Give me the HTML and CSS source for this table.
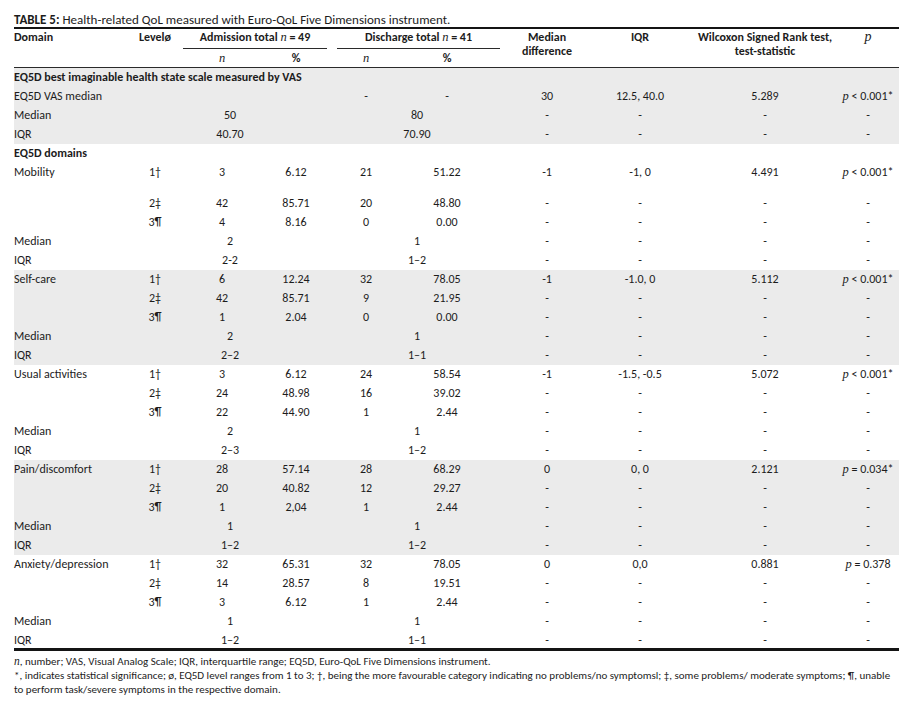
FILE: index.html
```html
<!DOCTYPE html>
<html lang="en">
<head>
<meta charset="utf-8">
<title>TABLE 5</title>
<link rel="stylesheet" href="styles.css">
</head>
<body>
<div class="page">
  <div class="caption"><b>TABLE 5:</b> Health-related QoL measured with Euro-QoL Five Dimensions instrument.</div>
  <table class="qol">
    <colgroup>
      <col class="c-domain"><col class="c-level"><col class="c-an"><col class="c-ap"><col class="c-dn"><col class="c-dp"><col class="c-md"><col class="c-iqr"><col class="c-wil"><col class="c-p">
    </colgroup>
    <thead>
      <tr class="h1">
        <th rowspan="2" class="left top">Domain</th>
        <th rowspan="2" class="top">Levelø</th>
        <th colspan="2" class="grp adm"><div class="grp-line adm-line">Admission total <i class="it">n</i> = 49</div></th>
        <th colspan="2" class="grp dis"><div class="grp-line dis-line">Discharge total <i class="it">n</i> = 41</div></th>
        <th rowspan="2" class="top">Median<br>difference</th>
        <th rowspan="2" class="top">IQR</th>
        <th rowspan="2" class="top wil">Wilcoxon Signed Rank test,<br>test-statistic</th>
        <th rowspan="2" class="top"><i class="it pbig">p</i></th>
      </tr>
      <tr class="h2">
        <th><i class="it">n</i></th>
        <th>%</th>
        <th><i class="it">n</i></th>
        <th>%</th>
      </tr>
    </thead>
    <tbody class="shade">
      <tr><td colspan="10" class="left bold">EQ5D best imaginable health state scale measured by VAS</td></tr>
      <tr><td class="left">EQ5D VAS median</td><td></td><td></td><td></td><td>-</td><td>-</td><td>30</td><td>12.5, 40.0</td><td class="wil">5.289</td><td><i class="it">p</i> &lt; 0.001*</td></tr>
      <tr><td class="left">Median</td><td></td><td colspan="2" class="adm-span">50</td><td colspan="2" class="dis-span">80</td><td>-</td><td>-</td><td class="wil">-</td><td>-</td></tr>
      <tr><td class="left">IQR</td><td></td><td colspan="2" class="adm-span">40.70</td><td colspan="2" class="dis-span">70.90</td><td>-</td><td>-</td><td class="wil">-</td><td>-</td></tr>
    </tbody>
    <tbody>
      <tr><td colspan="10" class="left bold">EQ5D domains</td></tr>
      <tr class="tall"><td class="left">Mobility</td><td>1†</td><td>3</td><td>6.12</td><td>21</td><td>51.22</td><td>-1</td><td>-1, 0</td><td class="wil">4.491</td><td><i class="it">p</i> &lt; 0.001*</td></tr>
      <tr><td></td><td>2‡</td><td>42</td><td>85.71</td><td>20</td><td>48.80</td><td>-</td><td>-</td><td class="wil">-</td><td>-</td></tr>
      <tr><td></td><td>3¶</td><td>4</td><td>8.16</td><td>0</td><td>0.00</td><td>-</td><td>-</td><td class="wil">-</td><td>-</td></tr>
      <tr><td class="left">Median</td><td></td><td colspan="2" class="adm-span">2</td><td colspan="2" class="dis-span">1</td><td>-</td><td>-</td><td class="wil">-</td><td>-</td></tr>
      <tr><td class="left">IQR</td><td></td><td colspan="2" class="adm-span">2-2</td><td colspan="2" class="dis-span">1–2</td><td>-</td><td>-</td><td class="wil">-</td><td>-</td></tr>
    </tbody>
    <tbody class="shade">
      <tr><td class="left">Self-care</td><td>1†</td><td>6</td><td>12.24</td><td>32</td><td>78.05</td><td>-1</td><td>-1.0, 0</td><td class="wil">5.112</td><td><i class="it">p</i> &lt; 0.001*</td></tr>
      <tr><td></td><td>2‡</td><td>42</td><td>85.71</td><td>9</td><td>21.95</td><td>-</td><td>-</td><td class="wil">-</td><td>-</td></tr>
      <tr><td></td><td>3¶</td><td>1</td><td>2.04</td><td>0</td><td>0.00</td><td>-</td><td>-</td><td class="wil">-</td><td>-</td></tr>
      <tr><td class="left">Median</td><td></td><td colspan="2" class="adm-span">2</td><td colspan="2" class="dis-span">1</td><td>-</td><td>-</td><td class="wil">-</td><td>-</td></tr>
      <tr><td class="left">IQR</td><td></td><td colspan="2" class="adm-span">2–2</td><td colspan="2" class="dis-span">1–1</td><td>-</td><td>-</td><td class="wil">-</td><td>-</td></tr>
    </tbody>
    <tbody>
      <tr><td class="left">Usual activities</td><td>1†</td><td>3</td><td>6.12</td><td>24</td><td>58.54</td><td>-1</td><td>-1.5, -0.5</td><td class="wil">5.072</td><td><i class="it">p</i> &lt; 0.001*</td></tr>
      <tr><td></td><td>2‡</td><td>24</td><td>48.98</td><td>16</td><td>39.02</td><td>-</td><td>-</td><td class="wil">-</td><td>-</td></tr>
      <tr><td></td><td>3¶</td><td>22</td><td>44.90</td><td>1</td><td>2.44</td><td>-</td><td>-</td><td class="wil">-</td><td>-</td></tr>
      <tr><td class="left">Median</td><td></td><td colspan="2" class="adm-span">2</td><td colspan="2" class="dis-span">1</td><td>-</td><td>-</td><td class="wil">-</td><td>-</td></tr>
      <tr><td class="left">IQR</td><td></td><td colspan="2" class="adm-span">2–3</td><td colspan="2" class="dis-span">1–2</td><td>-</td><td>-</td><td class="wil">-</td><td>-</td></tr>
    </tbody>
    <tbody class="shade">
      <tr><td class="left">Pain/discomfort</td><td>1†</td><td>28</td><td>57.14</td><td>28</td><td>68.29</td><td>0</td><td>0, 0</td><td class="wil">2.121</td><td><i class="it">p</i> = 0.034*</td></tr>
      <tr><td></td><td>2‡</td><td>20</td><td>40.82</td><td>12</td><td>29.27</td><td>-</td><td>-</td><td class="wil">-</td><td>-</td></tr>
      <tr><td></td><td>3¶</td><td>1</td><td>2,04</td><td>1</td><td>2.44</td><td>-</td><td>-</td><td class="wil">-</td><td>-</td></tr>
      <tr><td class="left">Median</td><td></td><td colspan="2" class="adm-span">1</td><td colspan="2" class="dis-span">1</td><td>-</td><td>-</td><td class="wil">-</td><td>-</td></tr>
      <tr><td class="left">IQR</td><td></td><td colspan="2" class="adm-span">1–2</td><td colspan="2" class="dis-span">1–2</td><td>-</td><td>-</td><td class="wil">-</td><td>-</td></tr>
    </tbody>
    <tbody class="last">
      <tr><td class="left">Anxiety/depression</td><td>1†</td><td>32</td><td>65.31</td><td>32</td><td>78.05</td><td>0</td><td>0,0</td><td class="wil">0.881</td><td><i class="it">p</i> = 0.378</td></tr>
      <tr><td></td><td>2‡</td><td>14</td><td>28.57</td><td>8</td><td>19.51</td><td>-</td><td>-</td><td class="wil">-</td><td>-</td></tr>
      <tr><td></td><td>3¶</td><td>3</td><td>6.12</td><td>1</td><td>2.44</td><td>-</td><td>-</td><td class="wil">-</td><td>-</td></tr>
      <tr><td class="left">Median</td><td></td><td colspan="2" class="adm-span">1</td><td colspan="2" class="dis-span">1</td><td>-</td><td>-</td><td class="wil">-</td><td>-</td></tr>
      <tr class="end"><td class="left">IQR</td><td></td><td colspan="2" class="adm-span">1–2</td><td colspan="2" class="dis-span">1–1</td><td>-</td><td>-</td><td class="wil">-</td><td>-</td></tr>
    </tbody>
  </table>
  <div class="notes">
    <p><i class="it">n</i>, number; VAS, Visual Analog Scale; IQR, interquartile range; EQ5D, Euro-QoL Five Dimensions instrument.</p>
    <p>*, indicates statistical significance; ø, EQ5D level ranges from 1 to 3; †, being the more favourable category indicating no problems/no symptomsl; ‡, some problems/ moderate symptoms; ¶, unable to perform task/severe symptoms in the respective domain.</p>
  </div>
</div>
</body>
</html>
```

FILE: styles.css
```css
html, body {
  margin: 0;
  padding: 0;
  background: #ffffff;
}

body {
  font-family: Carlito, Lato, "Liberation Sans", sans-serif;
  font-size: 12px;
  color: #1c1c1c;
}

.page {
  padding: 13px 0 0 14px;
  width: 885px;
}

.caption {
  font-size: 13px;
  line-height: 14px;
}

.caption b {
  font-weight: 700;
}

.it {
  font-family: "Liberation Serif", "Times New Roman", serif;
  font-style: italic;
  font-weight: 400;
  font-size: 12.5px;
}

.pbig {
  font-size: 14px;
}

.qol {
  border-collapse: collapse;
  table-layout: fixed;
  width: 885px;
  border-top: 2px solid #141414;
  margin-top: 0;
}

.c-domain { width: 111px; }
.c-level { width: 60px; }
.c-an { width: 74px; }
.c-ap { width: 74px; }
.c-dn { width: 66px; }
.c-dp { width: 96px; }
.c-md { width: 104px; }
.c-iqr { width: 82px; }
.c-wil { width: 156px; }
.c-p { width: 62px; }

.qol th,
.qol td {
  padding: 2px 0;
  line-height: 15px;
  white-space: nowrap;
  text-align: center;
  vertical-align: top;
  font-weight: 700;
}

.qol td {
  font-weight: 400;
}

.qol .left {
  text-align: left;
}

.qol .bold {
  font-weight: 700;
}

.qol th.top {
  padding: 1px 0 0;
  line-height: 14px;
  border-bottom: 1px solid #2a2a2a;
}

.qol th.wil,
.qol td.wil {
  padding-left: 12px;
}

.qol tr.h1 th.grp {
  padding: 1px 0 0;
}

.grp-line {
  line-height: 15px;
  padding-bottom: 3px;
  border-bottom: 1px solid #2a2a2a;
}

.adm-line {
  margin: 0 6px 0 -2px;
}

.qol th.dis {
  padding-left: 6px;
}

.dis-line {
  margin: 0 -5px 0 4px;
}

.qol tr.h2 th {
  padding: 2px 0 1px;
  border-bottom: 1px solid #2a2a2a;
}

.qol td.adm-span {
  padding-right: 58px;
}

.qol td.dis-span {
  padding-left: 6px;
}

.qol tbody.shade tr {
  background: #ebebeb;
}

.qol tr.tall td {
  padding-bottom: 14px;
}

.qol tr.end td {
  padding-bottom: 0;
}

.qol tbody.last tr.end td {
  border-bottom: 3px solid #141414;
}

.notes {
  margin-top: 4px;
  font-size: 11px;
  line-height: 14px;
}

.notes p {
  margin: 0;
}

.notes .it {
  font-size: 11.5px;
  line-height: 10px;
}
```
